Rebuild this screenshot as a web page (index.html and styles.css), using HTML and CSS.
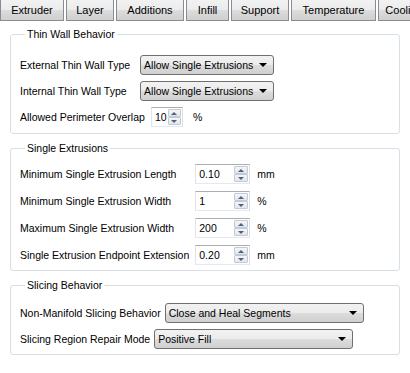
FILE: index.html
```html
<!doctype html>
<html lang="en">
<head>
    <meta charset="UTF-8">
    <title>Slicer Settings</title>
    <link rel="stylesheet" href="styles.css">
</head>
<body>
<div class="tabs">
    <div class="tab" style="width: 64px">Extruder</div>
    <div class="tab" style="width: 48px">Layer</div>
    <div class="tab" style="width: 68px">Additions</div>
    <div class="tab" style="width: 43px">Infill</div>
    <div class="tab" style="width: 58px">Support</div>
    <div class="tab" style="width: 85px">Temperature</div>
    <div class="tab" style="width: 52px">Cooling</div>
</div>

<div class="page">
    <!-- Thin walls -->
    <fieldset class="group thin">
        <legend>Thin Wall Behavior</legend>
        <div class="pair">
            <span>External Thin Wall Type</span>
            <div class="combo">Allow Single Extrusions<i class="arrow"></i></div>
            <span>Internal Thin Wall Type</span>
            <div class="combo">Allow Single Extrusions<i class="arrow"></i></div>
        </div>
        <div class="row tight">
            <span>Allowed Perimeter Overlap</span>
            <div class="spin small">
                <span class="value">10</span>
                <div class="spin-btns"><b class="up"></b><b class="down"></b></div>
            </div>
            <span class="unit">%</span>
        </div>
    </fieldset>

    <!-- Single extrusions -->
    <fieldset class="group single">
        <legend>Single Extrusions</legend>
        <div class="grid">
            <span>Minimum Single Extrusion Length</span>
            <div class="spin"><span class="value">0.10</span><div class="spin-btns"><b class="up"></b><b class="down"></b></div></div>
            <span class="unit">mm</span>

            <span>Minimum Single Extrusion Width</span>
            <div class="spin"><span class="value">1</span><div class="spin-btns"><b class="up"></b><b class="down"></b></div></div>
            <span class="unit">%</span>

            <span>Maximum Single Extrusion Width</span>
            <div class="spin"><span class="value">200</span><div class="spin-btns"><b class="up"></b><b class="down"></b></div></div>
            <span class="unit">%</span>

            <span>Single Extrusion Endpoint Extension</span>
            <div class="spin"><span class="value">0.20</span><div class="spin-btns"><b class="up"></b><b class="down"></b></div></div>
            <span class="unit">mm</span>
        </div>
    </fieldset>

    <!-- Slicing -->
    <fieldset class="group slicing">
        <legend>Slicing Behavior</legend>
        <div class="row">
            <span>Non-Manifold Slicing Behavior</span>
            <div class="combo" style="width: 199px">Close and Heal Segments<i class="arrow"></i></div>
        </div>
        <div class="row">
            <span>Slicing Region Repair Mode</span>
            <div class="combo" style="width: 199px">Positive Fill<i class="arrow"></i></div>
        </div>
    </fieldset>
</div>
</body>
</html>
```

FILE: styles.css
```css
/* Global */
body {
    margin: 0;
    background: #ffffff;
    font-family: 'Liberation Sans', Arial, sans-serif;
    font-size: 10.5px;
    color: #000;
    overflow: hidden;
}

/* Tab bar */
.tabs {
    display: flex;
    gap: 2px;
    height: 21px;
    white-space: nowrap;
    overflow: hidden;
}

.tab {
    flex: none;
    box-sizing: border-box;
    height: 21px;
    line-height: 21px;
    font-size: 11px;
    text-align: center;
    border: 1px solid #898c95;
    border-top: none;
    background: linear-gradient(#f2f2f2, #ebebeb 50%, #dddddd 50%, #cfcfcf);
}

/* Pages */
.page {
    padding: 7px 10px 0 10px;
}

.group {
    margin: 0 0 8px 0;
    padding: 15px 9px 6px 9px;
    border: 1px solid #d5dfe5;
    border-radius: 3px;
}

.group.single {
    padding-top: 10px;
    padding-bottom: 5px;
}

.group.slicing {
    margin-bottom: 0;
    padding-top: 12px;
    padding-bottom: 5px;
}

.group legend {
    padding: 0 2px;
    margin-left: 5px;
}

.pair {
    display: grid;
    grid-template-columns: auto 134px;
    justify-content: start;
    grid-auto-rows: 20px;
    row-gap: 6px;
    column-gap: 10px;
    align-items: center;
    margin-bottom: 6px;
}

.row {
    display: flex;
    align-items: center;
    gap: 10px;
    height: 20px;
    margin-bottom: 6px;
}

.row.tight {
    gap: 6px;
}

.slicing .row {
    gap: 4px;
}

.row:last-child {
    margin-bottom: 0;
}

.grid {
    display: grid;
    grid-template-columns: auto 55px auto;
    justify-content: start;
    grid-auto-rows: 20px;
    row-gap: 7px;
    column-gap: 6px;
    align-items: center;
    justify-items: start;
}

.unit {
    margin-left: 1px;
}

.row .unit {
    margin-left: 4px;
}

/* Combo box */
.combo {
    position: relative;
    box-sizing: border-box;
    height: 20px;
    line-height: 18px;
    padding-left: 3px;
    border: 1px solid #707070;
    border-radius: 3px;
    background: linear-gradient(#f2f2f2, #ebebeb 50%, #dddddd 50%, #cfcfcf);
}

.arrow {
    position: absolute;
    right: 6px;
    top: 7px;
    width: 0;
    height: 0;
    border-left: 4px solid transparent;
    border-right: 4px solid transparent;
    border-top: 4px solid #000;
}

/* Spin box */
.spin {
    display: flex;
    box-sizing: border-box;
    width: 55px;
    height: 20px;
    border: 1px solid #abadb3;
    border-color: #abadb3 #dbdfe6 #e3e9ef #e2e3ea;
    background: #fff;
}

.spin.small {
    width: 32px;
}

.spin .value {
    flex: 1;
    line-height: 18px;
    padding-left: 3px;
}

.spin-btns {
    display: flex;
    flex-direction: column;
    width: 14px;
    padding: 1px;
}

.spin-btns b {
    flex: 1;
    display: flex;
    align-items: center;
    justify-content: center;
    border: 1px solid #c3cad3;
    border-radius: 1px;
    background: linear-gradient(#f4f6f8, #e2e6eb);
}

.spin-btns b::after {
    content: '';
    width: 0;
    height: 0;
    border-left: 3px solid transparent;
    border-right: 3px solid transparent;
}

.spin-btns .up::after {
    border-bottom: 3px solid #4d6185;
}

.spin-btns .down::after {
    border-top: 3px solid #4d6185;
}
```
